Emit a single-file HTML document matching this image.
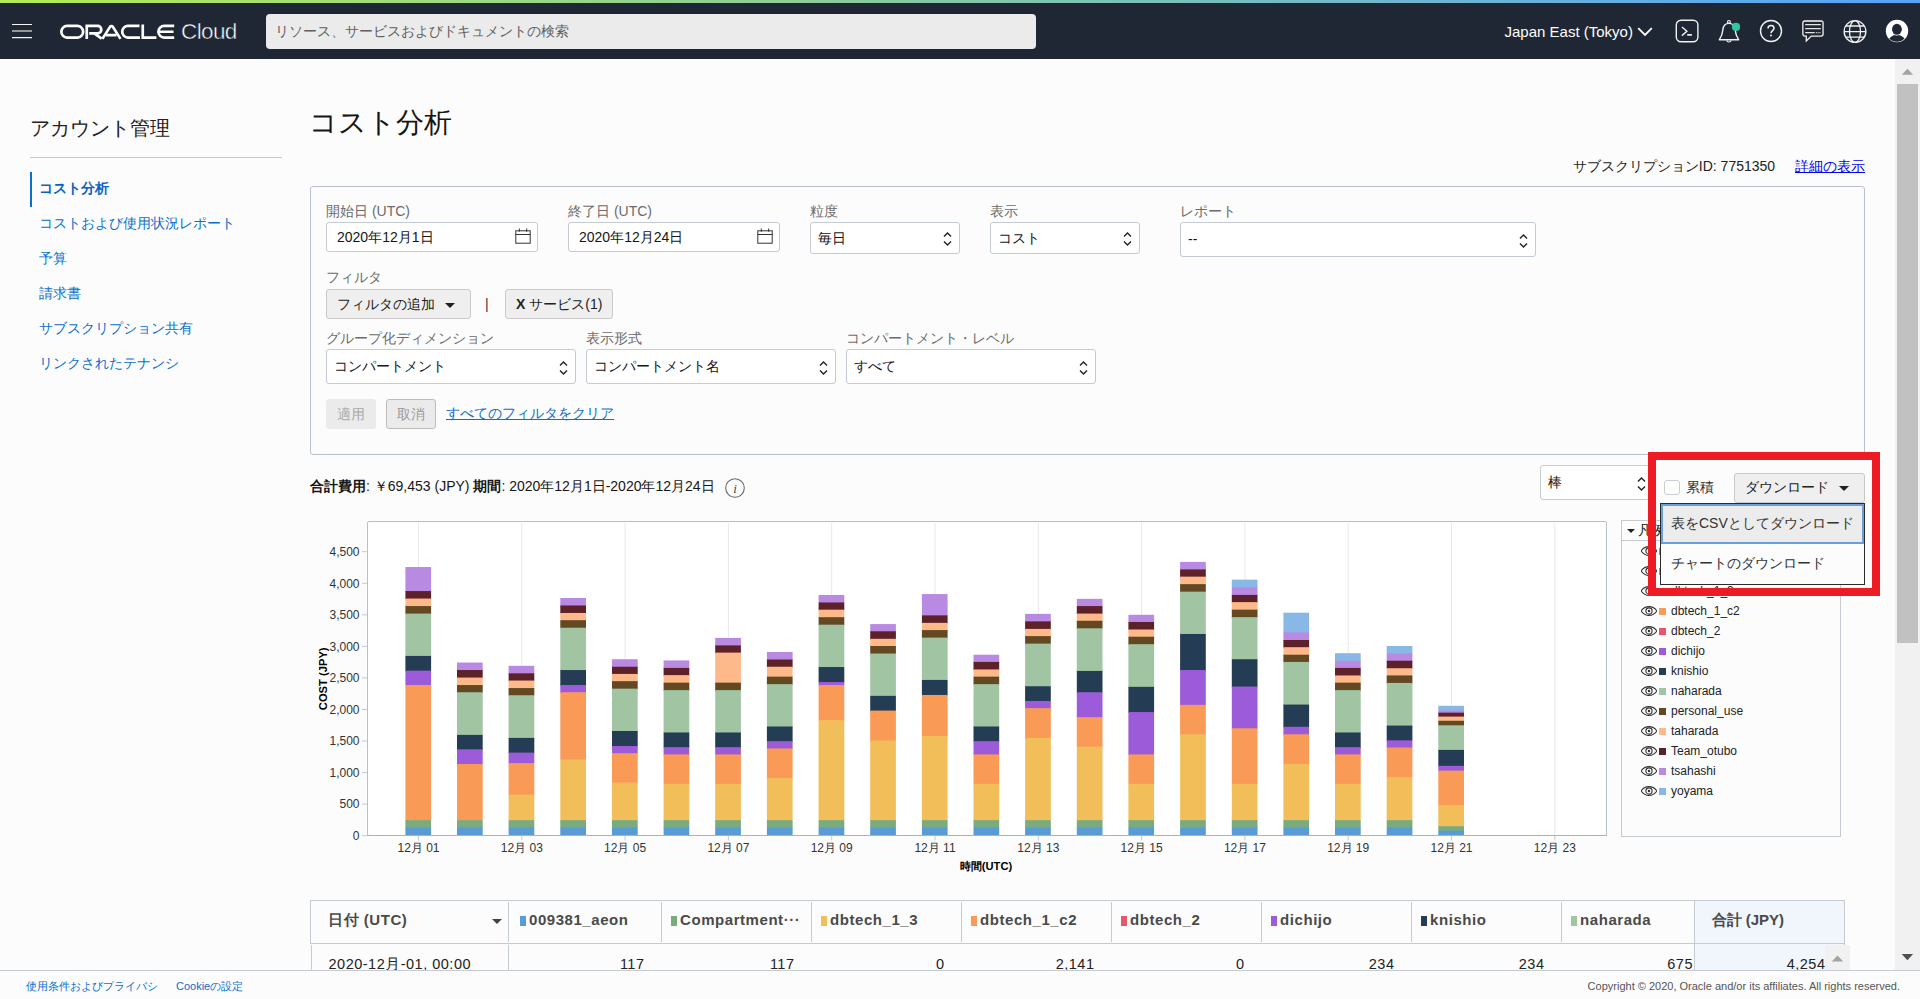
<!DOCTYPE html>
<html lang="ja">
<head>
<meta charset="utf-8">
<title>コスト分析 | Oracle Cloud Infrastructure</title>
<style>
*{box-sizing:border-box;margin:0;padding:0}
html,body{width:1920px;height:999px;overflow:hidden;background:#fcfcfc;font-family:"Liberation Sans",sans-serif;color:#222;font-size:14px}
body{position:relative}
.abs{position:absolute}
.strip{position:absolute;left:0;top:0;width:1920px;height:3px;background:linear-gradient(90deg,#b4eb55 0%,#55a3fa 100%)}
.hdr{position:absolute;left:0;top:3px;width:1920px;height:56px;background:#1e2733}
.hdr svg{position:absolute}
.cloud{position:absolute;left:181px;top:14.7px;font-size:22.5px;color:#fff;letter-spacing:-0.600px;line-height:28px;-webkit-text-stroke:0.500px #1e2733}
.search{position:absolute;left:266px;top:11px;width:770px;height:35px;background:#ebebeb;border-radius:4px;color:#5f5f5f;font-size:14px;line-height:35px;padding-left:9px;white-space:nowrap}
.region{position:absolute;left:1504.5px;top:19px;font-size:15px;color:#fff;line-height:20px;white-space:nowrap}
/* left nav */
.navt{position:absolute;left:30px;top:114px;font-size:19.5px;line-height:28px;color:#222;white-space:nowrap}
.navhr{position:absolute;left:30px;top:156.5px;width:252px;height:1px;background:#c4cbd2}
.nav a{position:absolute;left:39px;font-size:14px;line-height:20px;color:#0b6fcb;text-decoration:none;white-space:nowrap}
.nav .act{font-weight:bold;color:#0a63c4}
.navbar{position:absolute;left:30px;top:172px;width:2px;height:35px;background:#0b6fcb}
h1{position:absolute;left:308.500px;top:104px;font-size:28px;line-height:38px;font-weight:normal;color:#161616;white-space:nowrap}
.sub{position:absolute;right:55px;top:156px;font-size:14px;line-height:20px;color:#222;white-space:nowrap}
.sub a{color:#0000ee;margin-left:16px;text-decoration:underline}
.panel{position:absolute;left:310px;top:186px;width:1555px;height:269px;border:1px solid #b9c1cb;border-radius:3px}
.lbl{position:absolute;font-size:14px;line-height:18px;color:#6b6b6b;white-space:nowrap}
.inp{position:absolute;height:30px;border:1px solid #c4cbd2;border-radius:3px;background:#fff;font-size:14px;line-height:28px;padding-left:10px;color:#161616;white-space:nowrap}
.sel{position:absolute;border:1px solid #c4cbd2;border-radius:3px;background:#fff;font-size:14px;color:#161616;white-space:nowrap;padding-left:7px}
.sel svg,.inp svg{position:absolute}
.btn{position:absolute;height:30px;border:1px solid #c9c9c9;border-radius:3px;background:#efefef;font-size:14px;line-height:28px;color:#222;white-space:nowrap;text-align:left}
.caret{display:inline-block;width:0;height:0;border-left:5px solid transparent;border-right:5px solid transparent;border-top:5.5px solid #222;vertical-align:middle}
.lnk{position:absolute;color:#0b6fcb;text-decoration:underline;font-size:14px;line-height:20px;white-space:nowrap}
.sum{position:absolute;left:310px;top:476px;font-size:14px;line-height:20px;color:#161616;white-space:nowrap}
.chart{position:absolute}
.chart .ax{font-family:"Liberation Sans",sans-serif;font-size:12px;fill:#333}
.chart .axt{font-family:"Liberation Sans",sans-serif;font-size:11.200px;font-weight:bold;fill:#000}
.legend{position:absolute;left:1621px;top:520px;width:220px;height:317px;border:1px solid #c4cbd2;background:#fcfcfc}
.lh{position:absolute;left:0;top:0;width:218px;height:20px;border-bottom:1px solid #c4cbd2}
.tri{position:absolute;left:4.500px;top:7.500px;width:0;height:0;border-left:4px solid transparent;border-right:4px solid transparent;border-top:4.200px solid #222}
.lht{position:absolute;left:16px;top:0px;font-size:14px;line-height:19px;color:#111;white-space:nowrap}
.li{position:absolute;left:0;height:16px;width:218px}
.li .eye{position:absolute;left:19px;top:3px}
.li .sw{position:absolute;left:36.500px;top:4.5px;width:7px;height:7px}
.li .ln{position:absolute;left:49px;top:0;font-size:12px;line-height:16px;color:#222;white-space:nowrap}
/* red box & dropdown */
.red{position:absolute;left:1648px;top:452px;width:232px;height:144px;border:8px solid #ed1c24;background:transparent}
.cb{position:absolute;left:1664px;top:479.5px;width:15.5px;height:15.5px;border:1px solid #c9ced3;border-radius:3px;background:#fff}
.menu{position:absolute;left:1660px;top:503px;width:205px;height:82px;border:1px solid #2b2b2b;background:#fcfcfc}
.mi{position:absolute;left:0;width:203px;font-size:14px;color:#333;white-space:nowrap;padding-left:10px}
.mi.hl{top:0;height:40px;line-height:34.500px;background:#ececec;border:2px solid #6b9fdc;padding-left:8px}
/* table */
.tbl{position:absolute;left:310.5px;top:900px;width:1540px;height:70px}
.thead{position:absolute;left:-0.5px;top:-0.5px;width:1535px;height:44.5px;border:1px solid #c4cbd2;background:#fcfcfc}
.tot{position:absolute;left:1383.5px;top:-0.5px;width:151px;height:71px;border:1px solid #c4cbd2;border-bottom:none;background:#f1f6fd}
.th{position:absolute;top:0;height:44px}
.vs{position:absolute;top:2px;width:1px;height:40px;background:#c4cbd2}
.bl{position:absolute;top:45px;width:1px;height:26px;background:#c4cbd2}
.tht{position:absolute;top:9px;font-size:15px;line-height:22px;font-weight:bold;color:#4a4a4a;white-space:nowrap;letter-spacing:.55px}
.csw{position:absolute;left:11.500px;top:16px;width:6px;height:10px}
.sort{position:absolute;left:181px;top:19px;width:0;height:0;border-left:5px solid transparent;border-right:5px solid transparent;border-top:5.500px solid #444}
.td{position:absolute;top:44px;height:26px;font-size:14.500px;line-height:40px;text-align:right;color:#222;overflow:hidden;letter-spacing:.5px;white-space:nowrap}
.td0{position:absolute;left:0;top:44px;width:198px;height:26px;font-size:14.500px;line-height:40px;padding-left:18px;white-space:nowrap;overflow:hidden;letter-spacing:.5px}
.tsb{position:absolute;left:1514.500px;top:44.500px;width:25px;height:26px;background:#f1f1f1}
.up{position:absolute;left:7px;top:10.500px;width:0;height:0;border-left:5.500px solid transparent;border-right:5.500px solid transparent;border-bottom:6px solid #a3a3a3}
/* scrollbar */
.sbt{position:absolute;left:1895px;top:59px;width:25px;height:911px;background:#f1f1f1}
.sbth{position:absolute;left:1897px;top:84px;width:21px;height:559px;background:#c1c1c1}
/* footer */
.ftr{position:absolute;left:0;top:970px;width:1920px;height:29px;border-top:1px solid #c4cbd2;background:#fcfcfc;font-size:11px;line-height:14px}
.ftr a{position:absolute;top:8px;color:#0b6fcb;text-decoration:none;white-space:nowrap}
.ftr span{position:absolute;top:8px;right:20px;color:#555;white-space:nowrap}
</style>
</head>
<body>
<div class="strip"></div>
<div class="hdr">
<svg style="left:12px;top:20px" width="20" height="16" viewBox="0 0 20 16"><path d="M0 1.500H20M0 14.600H20" stroke="#f4f4f4" stroke-width="1.200" fill="none"/><path d="M0 8H20" stroke="#9c9c9c" stroke-width="1.900" fill="none"/></svg>
<svg style="left:60px;top:21px" width="116" height="16" viewBox="0 0 116 16"><g fill="none" stroke="#fff" stroke-width="2.700">
<path d="M7.150 1.950h10.200a5.800 5.800 0 0 1 0 11.600h-10.200a5.800 5.800 0 0 1 0-11.600z"/>
<path d="M26.750 14.900V1.950H37.600a3.700 3.700 0 0 1 0 7.400H29.200M34.600 9.600L41.700 14.700"/>
<path d="M42.400 14.900L50 2.900a1.700 1.700 0 0 1 2.900 0L60.500 14.900M46 11.200H56.500"/>
<path d="M79.500 1.950H68a5.800 5.800 0 0 0 0 11.600H80"/>
<path d="M82.750 0.600V13.550H96.400"/>
<path d="M114.200 1.950H104.200a5.800 5.800 0 0 0 0 11.600H114.200M99.500 7.750H113.500"/>
</g></svg>
<div class="cloud">Cloud</div>
<div class="search">リソース、サービスおよびドキュメントの検索</div>
<div class="region">Japan East (Tokyo)</div>
<svg style="left:1637px;top:23.500px" width="16" height="10" viewBox="0 0 16 10"><path d="M1.200 1.200L8 8l6.800-6.800" stroke="#fff" stroke-width="1.800" fill="none"/></svg>
<svg style="left:1675px;top:16px" width="24" height="24" viewBox="0 0 24 24"><rect x="1.300" y="1.200" width="21.600" height="21.600" rx="4.800" fill="none" stroke="#f2f2f2" stroke-width="1.400"/><path d="M6.900 8L11.900 12.300L6.900 16.600" fill="none" stroke="#f2f2f2" stroke-width="1.400"/><path d="M12.200 15.900H16.900" fill="none" stroke="#f2f2f2" stroke-width="1.700"/></svg>
<svg style="left:1717px;top:15px" width="26" height="28" viewBox="0 0 26 28"><path d="M11.900 5.400C8.200 5.400 6.300 8 5.900 11.600C5.500 15.600 4.300 19 2.300 21.800H21.700C19.700 19 18.500 15.600 18.100 11.600C17.700 8 15.600 5.400 11.900 5.400Z" fill="none" stroke="#f2f2f2" stroke-width="1.400" stroke-linejoin="round"/><circle cx="11.900" cy="3.900" r="1.400" fill="none" stroke="#f2f2f2" stroke-width="1.200"/><path d="M9.600 22.300a2.400 2.400 0 0 0 4.600 0" fill="none" stroke="#f2f2f2" stroke-width="1.200"/><circle cx="19" cy="8.900" r="4.100" fill="#33c5a0"/></svg>
<svg style="left:1759px;top:15.900px" width="24" height="24" viewBox="0 0 24 24"><circle cx="12" cy="12" r="10.500" fill="none" stroke="#f2f2f2" stroke-width="1.400"/><path d="M9 9.600c0-1.900 1.300-3 3-3s3 1.100 3 2.700c0 2.200-3 2.400-3 4.900" fill="none" stroke="#f2f2f2" stroke-width="1.500"/><circle cx="12" cy="16.600" r="1" fill="#f2f2f2"/></svg>
<svg style="left:1801px;top:16px" width="24" height="26" viewBox="0 0 24 26"><path d="M1.850 3.850a2 2 0 0 1 2-2h16.200a2 2 0 0 1 2 2v11.200a2 2 0 0 1-2 2H10.300L5.300 22v-4.950H3.850a2 2 0 0 1-2-2z" fill="none" stroke="#f2f2f2" stroke-width="1.300"/><path d="M3 2.300h18" stroke="#c9cbce" stroke-width="1.300"/><path d="M4.200 5.700h15.600M4.200 9.700h15.600M4.200 13.700h9.500" stroke="#e4e5e7" stroke-width="1.300"/><path d="M14.800 13.700h5" stroke="#e4e5e7" stroke-width="1.300" stroke-dasharray="1 0.800"/></svg>
<svg style="left:1843px;top:16px" width="24" height="24" viewBox="0 0 24 24"><g fill="none" stroke="#f2f2f2" stroke-width="1.300"><circle cx="12" cy="12.600" r="10.900"/><ellipse cx="12" cy="12.600" rx="5.500" ry="10.900"/><path d="M1.100 12.600h21.800M2.900 7h18.200M2.900 18.200h18.200"/></g></svg>
<svg style="left:1885px;top:16px" width="24" height="24" viewBox="0 0 24 24"><circle cx="12" cy="12" r="11.200" fill="#fff"/><ellipse cx="11.900" cy="10.300" rx="4.900" ry="5.500" fill="#1e2733"/><path d="M4.300 19.600c1.500-2.300 3.600-3.300 5.600-3.700c1.300 0.700 2.700 0.700 4 0c2 0.400 4.100 1.400 5.600 3.700a10.600 10.600 0 0 1-15.200 0z" fill="#1e2733"/></svg>
</div>

<div class="navt">アカウント管理</div>
<div class="navhr"></div>
<div class="navbar"></div>
<div class="nav">
<a class="act" style="top:178px">コスト分析</a>
<a style="top:213px">コストおよび使用状況レポート</a>
<a style="top:248px">予算</a>
<a style="top:283px">請求書</a>
<a style="top:318px">サブスクリプション共有</a>
<a style="top:353px">リンクされたテナンシ</a>
</div>

<h1>コスト分析</h1>
<div class="sub">サブスクリプションID: 7751350 <a>詳細の表示</a></div>

<div class="panel"></div>
<div class="lbl" style="left:326px;top:202px">開始日 (UTC)</div>
<div class="lbl" style="left:568px;top:202px">終了日 (UTC)</div>
<div class="lbl" style="left:810px;top:202px">粒度</div>
<div class="lbl" style="left:990px;top:202px">表示</div>
<div class="lbl" style="left:1180px;top:202px">レポート</div>
<div class="inp" style="left:326px;top:222px;width:212px">2020年12月1日<svg style="right:6px;top:5px" width="16" height="16" viewBox="0 0 16 16"><rect x="0.800" y="2.800" width="14.400" height="12.400" fill="none" stroke="#333" stroke-width="1"/><path d="M0.800 6.500h14.400M4.300 0.500v3.300M11.700 0.500v3.300" stroke="#333" stroke-width="1"/></svg></div>
<div class="inp" style="left:568px;top:222px;width:212px">2020年12月24日<svg style="right:6px;top:5px" width="16" height="16" viewBox="0 0 16 16"><rect x="0.800" y="2.800" width="14.400" height="12.400" fill="none" stroke="#333" stroke-width="1"/><path d="M0.800 6.500h14.400M4.300 0.500v3.300M11.700 0.500v3.300" stroke="#333" stroke-width="1"/></svg></div>
<div class="sel" style="left:810px;top:222px;width:150px;height:32px;line-height:30px">毎日<svg style="right:7px;top:8px" width="9" height="16" viewBox="0 0 9 16"><path d="M1 5.500L4.500 2 8 5.500M1 10.500L4.500 14 8 10.500" fill="none" stroke="#222" stroke-width="1.400"/></svg></div>
<div class="sel" style="left:990px;top:222px;width:150px;height:32px;line-height:30px">コスト<svg style="right:7px;top:8px" width="9" height="16" viewBox="0 0 9 16"><path d="M1 5.500L4.500 2 8 5.500M1 10.500L4.500 14 8 10.500" fill="none" stroke="#222" stroke-width="1.400"/></svg></div>
<div class="sel" style="left:1180px;top:222px;width:356px;height:35px;line-height:33px">--<svg style="right:7px;top:10px" width="9" height="16" viewBox="0 0 9 16"><path d="M1 5.500L4.500 2 8 5.500M1 10.500L4.500 14 8 10.500" fill="none" stroke="#222" stroke-width="1.400"/></svg></div>
<div class="lbl" style="left:326px;top:268px">フィルタ</div>
<div class="btn" style="left:326px;top:289px;width:145px;padding-left:10px">フィルタの追加 <span class="caret" style="margin-left:6px"></span></div>
<div class="abs" style="left:485px;top:295px;font-size:14px;line-height:18px;color:#333">|</div>
<div class="btn" style="left:505px;top:289px;width:108px;padding-left:10px"><b style="font-size:14px">X</b> サービス(1)</div>
<div class="lbl" style="left:326px;top:329px">グループ化ディメンション</div>
<div class="lbl" style="left:586px;top:329px">表示形式</div>
<div class="lbl" style="left:846px;top:329px">コンパートメント・レベル</div>
<div class="sel" style="left:326px;top:349px;width:250px;height:35px;line-height:33px">コンパートメント<svg style="right:7px;top:9.5px" width="9" height="16" viewBox="0 0 9 16"><path d="M1 5.500L4.500 2 8 5.500M1 10.500L4.500 14 8 10.500" fill="none" stroke="#222" stroke-width="1.400"/></svg></div>
<div class="sel" style="left:586px;top:349px;width:250px;height:35px;line-height:33px">コンパートメント名<svg style="right:7px;top:9.5px" width="9" height="16" viewBox="0 0 9 16"><path d="M1 5.500L4.500 2 8 5.500M1 10.500L4.500 14 8 10.500" fill="none" stroke="#222" stroke-width="1.400"/></svg></div>
<div class="sel" style="left:846px;top:349px;width:250px;height:35px;line-height:33px">すべて<svg style="right:7px;top:9.5px" width="9" height="16" viewBox="0 0 9 16"><path d="M1 5.500L4.500 2 8 5.500M1 10.500L4.500 14 8 10.500" fill="none" stroke="#222" stroke-width="1.400"/></svg></div>
<div class="btn" style="left:326px;top:399px;width:50px;border-color:#ebebeb;background:#ebebeb;color:#a8a8a8;text-align:center">適用</div>
<div class="btn" style="left:386px;top:399px;width:50px;border-color:#bdbdbd;background:#ebebeb;color:#9a9a9a;text-align:center">取消</div>
<a class="lnk" style="left:446px;top:403px">すべてのフィルタをクリア</a>

<div class="sum"><b>合計費用</b>: ￥69,453 (JPY) <b>期間</b>: 2020年12月1日-2020年12月24日</div>
<svg class="abs" style="left:724px;top:476.700px" width="22" height="22" viewBox="0 0 22 22"><circle cx="11" cy="11" r="9.300" fill="none" stroke="#6a6a6a" stroke-width="1.100"/><text x="11" y="15.500" text-anchor="middle" font-family="Liberation Serif" font-style="italic" font-size="13" fill="#444">i</text></svg>
<div class="sel" style="left:1540px;top:465px;width:112px;height:35px;line-height:33px">棒<svg style="right:5px;top:9.5px" width="9" height="16" viewBox="0 0 9 16"><path d="M1 5.500L4.500 2 8 5.500M1 10.500L4.500 14 8 10.500" fill="none" stroke="#222" stroke-width="1.400"/></svg></div>

<svg class="chart" style="left:300px;top:512px" width="1320" height="370" viewBox="300 512 1320 370">
<rect x="367.5" y="521.5" width="1239" height="314" rx="1.5" fill="#fff" stroke="#b7c0ca" stroke-width="1"/>
<line x1="418.5" y1="523" x2="418.5" y2="835" stroke="#e8e8e8" stroke-width="1"/>
<line x1="418.5" y1="836" x2="418.5" y2="840.5" stroke="#c4cbd2" stroke-width="1"/>
<text x="418.5" y="852" text-anchor="middle" class="ax">12月 01</text>
<line x1="521.8" y1="523" x2="521.8" y2="835" stroke="#e8e8e8" stroke-width="1"/>
<line x1="521.8" y1="836" x2="521.8" y2="840.5" stroke="#c4cbd2" stroke-width="1"/>
<text x="521.8" y="852" text-anchor="middle" class="ax">12月 03</text>
<line x1="625.1" y1="523" x2="625.1" y2="835" stroke="#e8e8e8" stroke-width="1"/>
<line x1="625.1" y1="836" x2="625.1" y2="840.5" stroke="#c4cbd2" stroke-width="1"/>
<text x="625.1" y="852" text-anchor="middle" class="ax">12月 05</text>
<line x1="728.4" y1="523" x2="728.4" y2="835" stroke="#e8e8e8" stroke-width="1"/>
<line x1="728.4" y1="836" x2="728.4" y2="840.5" stroke="#c4cbd2" stroke-width="1"/>
<text x="728.4" y="852" text-anchor="middle" class="ax">12月 07</text>
<line x1="831.7" y1="523" x2="831.7" y2="835" stroke="#e8e8e8" stroke-width="1"/>
<line x1="831.7" y1="836" x2="831.7" y2="840.5" stroke="#c4cbd2" stroke-width="1"/>
<text x="831.7" y="852" text-anchor="middle" class="ax">12月 09</text>
<line x1="935.0" y1="523" x2="935.0" y2="835" stroke="#e8e8e8" stroke-width="1"/>
<line x1="935.0" y1="836" x2="935.0" y2="840.5" stroke="#c4cbd2" stroke-width="1"/>
<text x="935.0" y="852" text-anchor="middle" class="ax">12月 11</text>
<line x1="1038.3" y1="523" x2="1038.3" y2="835" stroke="#e8e8e8" stroke-width="1"/>
<line x1="1038.3" y1="836" x2="1038.3" y2="840.5" stroke="#c4cbd2" stroke-width="1"/>
<text x="1038.3" y="852" text-anchor="middle" class="ax">12月 13</text>
<line x1="1141.6" y1="523" x2="1141.6" y2="835" stroke="#e8e8e8" stroke-width="1"/>
<line x1="1141.6" y1="836" x2="1141.6" y2="840.5" stroke="#c4cbd2" stroke-width="1"/>
<text x="1141.6" y="852" text-anchor="middle" class="ax">12月 15</text>
<line x1="1244.9" y1="523" x2="1244.9" y2="835" stroke="#e8e8e8" stroke-width="1"/>
<line x1="1244.9" y1="836" x2="1244.9" y2="840.5" stroke="#c4cbd2" stroke-width="1"/>
<text x="1244.9" y="852" text-anchor="middle" class="ax">12月 17</text>
<line x1="1348.2" y1="523" x2="1348.2" y2="835" stroke="#e8e8e8" stroke-width="1"/>
<line x1="1348.2" y1="836" x2="1348.2" y2="840.5" stroke="#c4cbd2" stroke-width="1"/>
<text x="1348.2" y="852" text-anchor="middle" class="ax">12月 19</text>
<line x1="1451.5" y1="523" x2="1451.5" y2="835" stroke="#e8e8e8" stroke-width="1"/>
<line x1="1451.5" y1="836" x2="1451.5" y2="840.5" stroke="#c4cbd2" stroke-width="1"/>
<text x="1451.5" y="852" text-anchor="middle" class="ax">12月 21</text>
<line x1="1554.8" y1="523" x2="1554.8" y2="835" stroke="#e8e8e8" stroke-width="1"/>
<line x1="1554.8" y1="836" x2="1554.8" y2="840.5" stroke="#c4cbd2" stroke-width="1"/>
<text x="1554.8" y="852" text-anchor="middle" class="ax">12月 23</text>
<line x1="362" y1="835.7" x2="367" y2="835.7" stroke="#c4cbd2" stroke-width="1"/>
<text x="359.5" y="839.9" text-anchor="end" class="ax">0</text>
<line x1="362" y1="804.1" x2="367" y2="804.1" stroke="#c4cbd2" stroke-width="1"/>
<text x="359.5" y="808.3" text-anchor="end" class="ax">500</text>
<line x1="362" y1="772.6" x2="367" y2="772.6" stroke="#c4cbd2" stroke-width="1"/>
<text x="359.5" y="776.8" text-anchor="end" class="ax">1,000</text>
<line x1="362" y1="741.0" x2="367" y2="741.0" stroke="#c4cbd2" stroke-width="1"/>
<text x="359.5" y="745.2" text-anchor="end" class="ax">1,500</text>
<line x1="362" y1="709.5" x2="367" y2="709.5" stroke="#c4cbd2" stroke-width="1"/>
<text x="359.5" y="713.7" text-anchor="end" class="ax">2,000</text>
<line x1="362" y1="677.9" x2="367" y2="677.9" stroke="#c4cbd2" stroke-width="1"/>
<text x="359.5" y="682.1" text-anchor="end" class="ax">2,500</text>
<line x1="362" y1="646.4" x2="367" y2="646.4" stroke="#c4cbd2" stroke-width="1"/>
<text x="359.5" y="650.6" text-anchor="end" class="ax">3,000</text>
<line x1="362" y1="614.8" x2="367" y2="614.8" stroke="#c4cbd2" stroke-width="1"/>
<text x="359.5" y="619.0" text-anchor="end" class="ax">3,500</text>
<line x1="362" y1="583.3" x2="367" y2="583.3" stroke="#c4cbd2" stroke-width="1"/>
<text x="359.5" y="587.5" text-anchor="end" class="ax">4,000</text>
<line x1="362" y1="551.7" x2="367" y2="551.7" stroke="#c4cbd2" stroke-width="1"/>
<text x="359.5" y="555.9" text-anchor="end" class="ax">4,500</text>
<rect x="405.4" y="567.03" width="25.7" height="24.72" fill="#b98ae2"/>
<rect x="405.4" y="591.05" width="25.7" height="8.21" fill="#5c2129"/>
<rect x="405.4" y="598.56" width="25.7" height="8.21" fill="#fdb98a"/>
<rect x="405.4" y="606.07" width="25.7" height="8.21" fill="#634822"/>
<rect x="405.4" y="613.57" width="25.7" height="43.04" fill="#a1c4a3"/>
<rect x="405.4" y="655.92" width="25.7" height="15.41" fill="#243d54"/>
<rect x="405.4" y="670.63" width="25.7" height="15.11" fill="#9c5bd9"/>
<rect x="405.4" y="685.05" width="25.7" height="135.84" fill="#fa9a57"/>
<rect x="405.4" y="820.18" width="25.7" height="8.21" fill="#7aab7d"/>
<rect x="405.4" y="827.69" width="25.7" height="7.51" fill="#5b9bd5"/>
<rect x="457.0" y="662.52" width="25.7" height="8.21" fill="#b98ae2"/>
<rect x="457.0" y="670.03" width="25.7" height="8.21" fill="#5c2129"/>
<rect x="457.0" y="677.54" width="25.7" height="8.21" fill="#fdb98a"/>
<rect x="457.0" y="685.05" width="25.7" height="7.91" fill="#634822"/>
<rect x="457.0" y="692.25" width="25.7" height="43.34" fill="#a1c4a3"/>
<rect x="457.0" y="734.89" width="25.7" height="15.11" fill="#243d54"/>
<rect x="457.0" y="749.31" width="25.7" height="15.41" fill="#9c5bd9"/>
<rect x="457.0" y="764.02" width="25.7" height="56.86" fill="#fa9a57"/>
<rect x="457.0" y="820.18" width="25.7" height="8.21" fill="#7aab7d"/>
<rect x="457.0" y="827.69" width="25.7" height="7.51" fill="#5b9bd5"/>
<rect x="508.6" y="665.83" width="25.7" height="8.21" fill="#b98ae2"/>
<rect x="508.6" y="673.33" width="25.7" height="7.91" fill="#5c2129"/>
<rect x="508.6" y="680.54" width="25.7" height="8.21" fill="#fdb98a"/>
<rect x="508.6" y="688.05" width="25.7" height="7.91" fill="#634822"/>
<rect x="508.6" y="695.26" width="25.7" height="43.34" fill="#a1c4a3"/>
<rect x="508.6" y="737.90" width="25.7" height="15.41" fill="#243d54"/>
<rect x="508.6" y="752.61" width="25.7" height="11.21" fill="#9c5bd9"/>
<rect x="508.6" y="763.12" width="25.7" height="32.23" fill="#fa9a57"/>
<rect x="508.6" y="794.65" width="25.7" height="26.23" fill="#f2be5a"/>
<rect x="508.6" y="820.18" width="25.7" height="8.21" fill="#7aab7d"/>
<rect x="508.6" y="827.69" width="25.7" height="7.51" fill="#5b9bd5"/>
<rect x="560.3" y="597.96" width="25.7" height="8.21" fill="#b98ae2"/>
<rect x="560.3" y="605.47" width="25.7" height="8.21" fill="#5c2129"/>
<rect x="560.3" y="612.97" width="25.7" height="7.91" fill="#fdb98a"/>
<rect x="560.3" y="620.18" width="25.7" height="8.21" fill="#634822"/>
<rect x="560.3" y="627.69" width="25.7" height="43.04" fill="#a1c4a3"/>
<rect x="560.3" y="670.03" width="25.7" height="15.72" fill="#243d54"/>
<rect x="560.3" y="685.05" width="25.7" height="7.91" fill="#9c5bd9"/>
<rect x="560.3" y="692.25" width="25.7" height="67.97" fill="#fa9a57"/>
<rect x="560.3" y="759.52" width="25.7" height="61.36" fill="#f2be5a"/>
<rect x="560.3" y="820.18" width="25.7" height="8.21" fill="#7aab7d"/>
<rect x="560.3" y="827.69" width="25.7" height="7.51" fill="#5b9bd5"/>
<rect x="612.0" y="659.22" width="25.7" height="8.21" fill="#b98ae2"/>
<rect x="612.0" y="666.73" width="25.7" height="7.91" fill="#5c2129"/>
<rect x="612.0" y="673.93" width="25.7" height="7.91" fill="#fdb98a"/>
<rect x="612.0" y="681.14" width="25.7" height="8.21" fill="#634822"/>
<rect x="612.0" y="688.65" width="25.7" height="43.04" fill="#a1c4a3"/>
<rect x="612.0" y="730.99" width="25.7" height="15.72" fill="#243d54"/>
<rect x="612.0" y="746.01" width="25.7" height="7.91" fill="#9c5bd9"/>
<rect x="612.0" y="753.21" width="25.7" height="30.13" fill="#fa9a57"/>
<rect x="612.0" y="782.64" width="25.7" height="38.24" fill="#f2be5a"/>
<rect x="612.0" y="820.18" width="25.7" height="8.21" fill="#7aab7d"/>
<rect x="612.0" y="827.69" width="25.7" height="7.51" fill="#5b9bd5"/>
<rect x="663.6" y="660.42" width="25.7" height="8.21" fill="#b98ae2"/>
<rect x="663.6" y="667.93" width="25.7" height="7.91" fill="#5c2129"/>
<rect x="663.6" y="675.14" width="25.7" height="8.21" fill="#fdb98a"/>
<rect x="663.6" y="682.64" width="25.7" height="8.21" fill="#634822"/>
<rect x="663.6" y="690.15" width="25.7" height="43.04" fill="#a1c4a3"/>
<rect x="663.6" y="732.49" width="25.7" height="15.41" fill="#243d54"/>
<rect x="663.6" y="747.21" width="25.7" height="7.91" fill="#9c5bd9"/>
<rect x="663.6" y="754.41" width="25.7" height="30.13" fill="#fa9a57"/>
<rect x="663.6" y="783.84" width="25.7" height="37.04" fill="#f2be5a"/>
<rect x="663.6" y="820.18" width="25.7" height="8.21" fill="#7aab7d"/>
<rect x="663.6" y="827.69" width="25.7" height="7.51" fill="#5b9bd5"/>
<rect x="715.2" y="637.90" width="25.7" height="8.21" fill="#b98ae2"/>
<rect x="715.2" y="645.41" width="25.7" height="7.91" fill="#5c2129"/>
<rect x="715.2" y="652.61" width="25.7" height="30.73" fill="#fdb98a"/>
<rect x="715.2" y="682.64" width="25.7" height="8.21" fill="#634822"/>
<rect x="715.2" y="690.15" width="25.7" height="43.04" fill="#a1c4a3"/>
<rect x="715.2" y="732.49" width="25.7" height="15.41" fill="#243d54"/>
<rect x="715.2" y="747.21" width="25.7" height="7.91" fill="#9c5bd9"/>
<rect x="715.2" y="754.41" width="25.7" height="30.13" fill="#fa9a57"/>
<rect x="715.2" y="783.84" width="25.7" height="37.04" fill="#f2be5a"/>
<rect x="715.2" y="820.18" width="25.7" height="8.21" fill="#7aab7d"/>
<rect x="715.2" y="827.69" width="25.7" height="7.51" fill="#5b9bd5"/>
<rect x="766.9" y="652.01" width="25.7" height="8.21" fill="#b98ae2"/>
<rect x="766.9" y="659.52" width="25.7" height="7.91" fill="#5c2129"/>
<rect x="766.9" y="666.73" width="25.7" height="10.61" fill="#fdb98a"/>
<rect x="766.9" y="676.64" width="25.7" height="8.21" fill="#634822"/>
<rect x="766.9" y="684.14" width="25.7" height="43.04" fill="#a1c4a3"/>
<rect x="766.9" y="726.49" width="25.7" height="15.41" fill="#243d54"/>
<rect x="766.9" y="741.20" width="25.7" height="7.91" fill="#9c5bd9"/>
<rect x="766.9" y="748.41" width="25.7" height="30.13" fill="#fa9a57"/>
<rect x="766.9" y="777.84" width="25.7" height="43.04" fill="#f2be5a"/>
<rect x="766.9" y="820.18" width="25.7" height="8.21" fill="#7aab7d"/>
<rect x="766.9" y="827.69" width="25.7" height="7.51" fill="#5b9bd5"/>
<rect x="818.6" y="594.95" width="25.7" height="8.21" fill="#b98ae2"/>
<rect x="818.6" y="602.46" width="25.7" height="7.91" fill="#5c2129"/>
<rect x="818.6" y="609.67" width="25.7" height="8.21" fill="#fdb98a"/>
<rect x="818.6" y="617.18" width="25.7" height="8.21" fill="#634822"/>
<rect x="818.6" y="624.68" width="25.7" height="43.04" fill="#a1c4a3"/>
<rect x="818.6" y="667.03" width="25.7" height="15.72" fill="#243d54"/>
<rect x="818.6" y="682.04" width="25.7" height="3.70" fill="#9c5bd9"/>
<rect x="818.6" y="685.05" width="25.7" height="35.84" fill="#fa9a57"/>
<rect x="818.6" y="720.18" width="25.7" height="100.70" fill="#f2be5a"/>
<rect x="818.6" y="820.18" width="25.7" height="8.21" fill="#7aab7d"/>
<rect x="818.6" y="827.69" width="25.7" height="7.51" fill="#5b9bd5"/>
<rect x="870.2" y="624.08" width="25.7" height="7.91" fill="#b98ae2"/>
<rect x="870.2" y="631.29" width="25.7" height="8.21" fill="#5c2129"/>
<rect x="870.2" y="638.80" width="25.7" height="7.91" fill="#fdb98a"/>
<rect x="870.2" y="646.01" width="25.7" height="8.21" fill="#634822"/>
<rect x="870.2" y="653.51" width="25.7" height="43.04" fill="#a1c4a3"/>
<rect x="870.2" y="695.86" width="25.7" height="15.41" fill="#243d54"/>
<rect x="870.2" y="710.57" width="25.7" height="30.73" fill="#fa9a57"/>
<rect x="870.2" y="740.60" width="25.7" height="80.28" fill="#f2be5a"/>
<rect x="870.2" y="820.18" width="25.7" height="8.21" fill="#7aab7d"/>
<rect x="870.2" y="827.69" width="25.7" height="7.51" fill="#5b9bd5"/>
<rect x="921.9" y="594.05" width="25.7" height="22.02" fill="#b98ae2"/>
<rect x="921.9" y="615.38" width="25.7" height="8.21" fill="#5c2129"/>
<rect x="921.9" y="622.88" width="25.7" height="7.91" fill="#fdb98a"/>
<rect x="921.9" y="630.09" width="25.7" height="8.21" fill="#634822"/>
<rect x="921.9" y="637.60" width="25.7" height="43.04" fill="#a1c4a3"/>
<rect x="921.9" y="679.94" width="25.7" height="15.72" fill="#243d54"/>
<rect x="921.9" y="694.95" width="25.7" height="41.84" fill="#fa9a57"/>
<rect x="921.9" y="736.10" width="25.7" height="84.78" fill="#f2be5a"/>
<rect x="921.9" y="820.18" width="25.7" height="8.21" fill="#7aab7d"/>
<rect x="921.9" y="827.69" width="25.7" height="7.51" fill="#5b9bd5"/>
<rect x="973.5" y="654.71" width="25.7" height="7.91" fill="#b98ae2"/>
<rect x="973.5" y="661.92" width="25.7" height="8.21" fill="#5c2129"/>
<rect x="973.5" y="669.43" width="25.7" height="7.91" fill="#fdb98a"/>
<rect x="973.5" y="676.64" width="25.7" height="8.21" fill="#634822"/>
<rect x="973.5" y="684.14" width="25.7" height="43.04" fill="#a1c4a3"/>
<rect x="973.5" y="726.49" width="25.7" height="15.41" fill="#243d54"/>
<rect x="973.5" y="741.20" width="25.7" height="13.91" fill="#9c5bd9"/>
<rect x="973.5" y="754.41" width="25.7" height="30.13" fill="#fa9a57"/>
<rect x="973.5" y="783.84" width="25.7" height="37.04" fill="#f2be5a"/>
<rect x="973.5" y="820.18" width="25.7" height="8.21" fill="#7aab7d"/>
<rect x="973.5" y="827.69" width="25.7" height="7.51" fill="#5b9bd5"/>
<rect x="1025.1" y="613.87" width="25.7" height="8.21" fill="#b98ae2"/>
<rect x="1025.1" y="621.38" width="25.7" height="8.21" fill="#5c2129"/>
<rect x="1025.1" y="628.89" width="25.7" height="7.91" fill="#fdb98a"/>
<rect x="1025.1" y="636.10" width="25.7" height="8.21" fill="#634822"/>
<rect x="1025.1" y="643.60" width="25.7" height="43.34" fill="#a1c4a3"/>
<rect x="1025.1" y="686.25" width="25.7" height="15.41" fill="#243d54"/>
<rect x="1025.1" y="700.96" width="25.7" height="7.91" fill="#9c5bd9"/>
<rect x="1025.1" y="708.17" width="25.7" height="30.43" fill="#fa9a57"/>
<rect x="1025.1" y="737.90" width="25.7" height="82.98" fill="#f2be5a"/>
<rect x="1025.1" y="820.18" width="25.7" height="8.21" fill="#7aab7d"/>
<rect x="1025.1" y="827.69" width="25.7" height="7.51" fill="#5b9bd5"/>
<rect x="1076.8" y="598.86" width="25.7" height="7.91" fill="#b98ae2"/>
<rect x="1076.8" y="606.07" width="25.7" height="8.21" fill="#5c2129"/>
<rect x="1076.8" y="613.57" width="25.7" height="7.91" fill="#fdb98a"/>
<rect x="1076.8" y="620.78" width="25.7" height="8.21" fill="#634822"/>
<rect x="1076.8" y="628.29" width="25.7" height="43.34" fill="#a1c4a3"/>
<rect x="1076.8" y="670.93" width="25.7" height="22.02" fill="#243d54"/>
<rect x="1076.8" y="692.25" width="25.7" height="25.62" fill="#9c5bd9"/>
<rect x="1076.8" y="717.18" width="25.7" height="30.13" fill="#fa9a57"/>
<rect x="1076.8" y="746.61" width="25.7" height="74.27" fill="#f2be5a"/>
<rect x="1076.8" y="820.18" width="25.7" height="8.21" fill="#7aab7d"/>
<rect x="1076.8" y="827.69" width="25.7" height="7.51" fill="#5b9bd5"/>
<rect x="1128.4" y="614.77" width="25.7" height="7.91" fill="#b98ae2"/>
<rect x="1128.4" y="621.98" width="25.7" height="8.21" fill="#5c2129"/>
<rect x="1128.4" y="629.49" width="25.7" height="7.91" fill="#fdb98a"/>
<rect x="1128.4" y="636.70" width="25.7" height="8.21" fill="#634822"/>
<rect x="1128.4" y="644.20" width="25.7" height="43.34" fill="#a1c4a3"/>
<rect x="1128.4" y="686.85" width="25.7" height="25.93" fill="#243d54"/>
<rect x="1128.4" y="712.07" width="25.7" height="43.04" fill="#9c5bd9"/>
<rect x="1128.4" y="754.41" width="25.7" height="30.13" fill="#fa9a57"/>
<rect x="1128.4" y="783.84" width="25.7" height="37.04" fill="#f2be5a"/>
<rect x="1128.4" y="820.18" width="25.7" height="8.21" fill="#7aab7d"/>
<rect x="1128.4" y="827.69" width="25.7" height="7.51" fill="#5b9bd5"/>
<rect x="1180.1" y="561.92" width="25.7" height="8.21" fill="#b98ae2"/>
<rect x="1180.1" y="569.43" width="25.7" height="7.91" fill="#5c2129"/>
<rect x="1180.1" y="576.64" width="25.7" height="8.21" fill="#fdb98a"/>
<rect x="1180.1" y="584.14" width="25.7" height="8.21" fill="#634822"/>
<rect x="1180.1" y="591.65" width="25.7" height="43.04" fill="#a1c4a3"/>
<rect x="1180.1" y="633.99" width="25.7" height="36.74" fill="#243d54"/>
<rect x="1180.1" y="670.03" width="25.7" height="35.53" fill="#9c5bd9"/>
<rect x="1180.1" y="704.86" width="25.7" height="30.13" fill="#fa9a57"/>
<rect x="1180.1" y="734.29" width="25.7" height="86.59" fill="#f2be5a"/>
<rect x="1180.1" y="820.18" width="25.7" height="8.21" fill="#7aab7d"/>
<rect x="1180.1" y="827.69" width="25.7" height="7.51" fill="#5b9bd5"/>
<rect x="1231.8" y="579.64" width="25.7" height="8.51" fill="#8ab8e6"/>
<rect x="1231.8" y="587.45" width="25.7" height="8.21" fill="#b98ae2"/>
<rect x="1231.8" y="594.95" width="25.7" height="7.91" fill="#5c2129"/>
<rect x="1231.8" y="602.16" width="25.7" height="8.21" fill="#fdb98a"/>
<rect x="1231.8" y="609.67" width="25.7" height="8.21" fill="#634822"/>
<rect x="1231.8" y="617.18" width="25.7" height="42.74" fill="#a1c4a3"/>
<rect x="1231.8" y="659.22" width="25.7" height="28.03" fill="#243d54"/>
<rect x="1231.8" y="686.55" width="25.7" height="42.44" fill="#9c5bd9"/>
<rect x="1231.8" y="728.29" width="25.7" height="56.26" fill="#fa9a57"/>
<rect x="1231.8" y="783.84" width="25.7" height="37.04" fill="#f2be5a"/>
<rect x="1231.8" y="820.18" width="25.7" height="8.21" fill="#7aab7d"/>
<rect x="1231.8" y="827.69" width="25.7" height="7.51" fill="#5b9bd5"/>
<rect x="1283.4" y="612.67" width="25.7" height="20.52" fill="#8ab8e6"/>
<rect x="1283.4" y="632.49" width="25.7" height="8.21" fill="#b98ae2"/>
<rect x="1283.4" y="640.00" width="25.7" height="7.91" fill="#5c2129"/>
<rect x="1283.4" y="647.21" width="25.7" height="8.21" fill="#fdb98a"/>
<rect x="1283.4" y="654.71" width="25.7" height="7.91" fill="#634822"/>
<rect x="1283.4" y="661.92" width="25.7" height="43.34" fill="#a1c4a3"/>
<rect x="1283.4" y="704.56" width="25.7" height="22.92" fill="#243d54"/>
<rect x="1283.4" y="726.79" width="25.7" height="8.21" fill="#9c5bd9"/>
<rect x="1283.4" y="734.29" width="25.7" height="30.43" fill="#fa9a57"/>
<rect x="1283.4" y="764.02" width="25.7" height="56.86" fill="#f2be5a"/>
<rect x="1283.4" y="820.18" width="25.7" height="8.21" fill="#7aab7d"/>
<rect x="1283.4" y="827.69" width="25.7" height="7.51" fill="#5b9bd5"/>
<rect x="1335.0" y="653.21" width="25.7" height="8.21" fill="#8ab8e6"/>
<rect x="1335.0" y="660.72" width="25.7" height="7.91" fill="#b98ae2"/>
<rect x="1335.0" y="667.93" width="25.7" height="8.21" fill="#5c2129"/>
<rect x="1335.0" y="675.44" width="25.7" height="7.91" fill="#fdb98a"/>
<rect x="1335.0" y="682.64" width="25.7" height="8.21" fill="#634822"/>
<rect x="1335.0" y="690.15" width="25.7" height="43.04" fill="#a1c4a3"/>
<rect x="1335.0" y="732.49" width="25.7" height="15.41" fill="#243d54"/>
<rect x="1335.0" y="747.21" width="25.7" height="7.91" fill="#9c5bd9"/>
<rect x="1335.0" y="754.41" width="25.7" height="30.13" fill="#fa9a57"/>
<rect x="1335.0" y="783.84" width="25.7" height="37.04" fill="#f2be5a"/>
<rect x="1335.0" y="820.18" width="25.7" height="8.21" fill="#7aab7d"/>
<rect x="1335.0" y="827.69" width="25.7" height="7.51" fill="#5b9bd5"/>
<rect x="1386.7" y="646.01" width="25.7" height="8.21" fill="#8ab8e6"/>
<rect x="1386.7" y="653.51" width="25.7" height="7.91" fill="#b98ae2"/>
<rect x="1386.7" y="660.72" width="25.7" height="8.21" fill="#5c2129"/>
<rect x="1386.7" y="668.23" width="25.7" height="7.91" fill="#fdb98a"/>
<rect x="1386.7" y="675.44" width="25.7" height="8.21" fill="#634822"/>
<rect x="1386.7" y="682.94" width="25.7" height="43.34" fill="#a1c4a3"/>
<rect x="1386.7" y="725.59" width="25.7" height="15.41" fill="#243d54"/>
<rect x="1386.7" y="740.30" width="25.7" height="7.91" fill="#9c5bd9"/>
<rect x="1386.7" y="747.51" width="25.7" height="30.13" fill="#fa9a57"/>
<rect x="1386.7" y="776.94" width="25.7" height="43.94" fill="#f2be5a"/>
<rect x="1386.7" y="820.18" width="25.7" height="8.21" fill="#7aab7d"/>
<rect x="1386.7" y="827.69" width="25.7" height="7.51" fill="#5b9bd5"/>
<rect x="1438.3" y="705.77" width="25.7" height="5.50" fill="#8ab8e6"/>
<rect x="1438.3" y="710.57" width="25.7" height="2.80" fill="#b98ae2"/>
<rect x="1438.3" y="712.67" width="25.7" height="4.60" fill="#5c2129"/>
<rect x="1438.3" y="716.58" width="25.7" height="4.90" fill="#fdb98a"/>
<rect x="1438.3" y="720.78" width="25.7" height="5.20" fill="#634822"/>
<rect x="1438.3" y="725.29" width="25.7" height="25.32" fill="#a1c4a3"/>
<rect x="1438.3" y="749.91" width="25.7" height="16.62" fill="#243d54"/>
<rect x="1438.3" y="765.83" width="25.7" height="5.50" fill="#9c5bd9"/>
<rect x="1438.3" y="770.63" width="25.7" height="35.23" fill="#fa9a57"/>
<rect x="1438.3" y="805.17" width="25.7" height="21.72" fill="#f2be5a"/>
<rect x="1438.3" y="826.19" width="25.7" height="5.20" fill="#7aab7d"/>
<rect x="1438.3" y="830.69" width="25.7" height="4.50" fill="#5b9bd5"/>
<line x1="367" y1="835.5" x2="1607" y2="835.5" stroke="#aab3bd" stroke-width="1"/>
<text x="986" y="870" text-anchor="middle" class="axt">時間(UTC)</text>
<text transform="translate(327,678.8) rotate(-90)" text-anchor="middle" class="axt">COST (JPY)</text>
</svg>
<div class="legend"><div class="lh"><span class="tri"></span><span class="lht">凡例</span></div>
<div class="li" style="top:22px"><svg class="eye" width="16" height="10" viewBox="0.5 0 16 10"><path d="M0.6 5C3 1.4 5.8 0.6 8.5 0.6S14 1.4 16.4 5C14 8.6 11.2 9.4 8.5 9.4S3 8.6 0.6 5Z" fill="none" stroke="#333" stroke-width="1.1"/><circle cx="8.5" cy="5" r="3.1" fill="none" stroke="#333" stroke-width="1.1"/><circle cx="8.5" cy="5" r="1.2" fill="#333"/></svg><span class="sw" style="background:#5b9bd5"></span><span class="ln">009381_aeon</span></div>
<div class="li" style="top:42px"><svg class="eye" width="16" height="10" viewBox="0.5 0 16 10"><path d="M0.6 5C3 1.4 5.8 0.6 8.5 0.6S14 1.4 16.4 5C14 8.6 11.2 9.4 8.5 9.4S3 8.6 0.6 5Z" fill="none" stroke="#333" stroke-width="1.1"/><circle cx="8.5" cy="5" r="3.1" fill="none" stroke="#333" stroke-width="1.1"/><circle cx="8.5" cy="5" r="1.2" fill="#333"/></svg><span class="sw" style="background:#7aab7d"></span><span class="ln">Compartment...</span></div>
<div class="li" style="top:62px"><svg class="eye" width="16" height="10" viewBox="0.5 0 16 10"><path d="M0.6 5C3 1.4 5.8 0.6 8.5 0.6S14 1.4 16.4 5C14 8.6 11.2 9.4 8.5 9.4S3 8.6 0.6 5Z" fill="none" stroke="#333" stroke-width="1.1"/><circle cx="8.5" cy="5" r="3.1" fill="none" stroke="#333" stroke-width="1.1"/><circle cx="8.5" cy="5" r="1.2" fill="#333"/></svg><span class="sw" style="background:#f2be5a"></span><span class="ln">dbtech_1_3</span></div>
<div class="li" style="top:82px"><svg class="eye" width="16" height="10" viewBox="0.5 0 16 10"><path d="M0.6 5C3 1.4 5.8 0.6 8.5 0.6S14 1.4 16.4 5C14 8.6 11.2 9.4 8.5 9.4S3 8.6 0.6 5Z" fill="none" stroke="#333" stroke-width="1.1"/><circle cx="8.5" cy="5" r="3.1" fill="none" stroke="#333" stroke-width="1.1"/><circle cx="8.5" cy="5" r="1.2" fill="#333"/></svg><span class="sw" style="background:#fa9a57"></span><span class="ln">dbtech_1_c2</span></div>
<div class="li" style="top:102px"><svg class="eye" width="16" height="10" viewBox="0.5 0 16 10"><path d="M0.6 5C3 1.4 5.8 0.6 8.5 0.6S14 1.4 16.4 5C14 8.6 11.2 9.4 8.5 9.4S3 8.6 0.6 5Z" fill="none" stroke="#333" stroke-width="1.1"/><circle cx="8.5" cy="5" r="3.1" fill="none" stroke="#333" stroke-width="1.1"/><circle cx="8.5" cy="5" r="1.2" fill="#333"/></svg><span class="sw" style="background:#e8566a"></span><span class="ln">dbtech_2</span></div>
<div class="li" style="top:122px"><svg class="eye" width="16" height="10" viewBox="0.5 0 16 10"><path d="M0.6 5C3 1.4 5.8 0.6 8.5 0.6S14 1.4 16.4 5C14 8.6 11.2 9.4 8.5 9.4S3 8.6 0.6 5Z" fill="none" stroke="#333" stroke-width="1.1"/><circle cx="8.5" cy="5" r="3.1" fill="none" stroke="#333" stroke-width="1.1"/><circle cx="8.5" cy="5" r="1.2" fill="#333"/></svg><span class="sw" style="background:#9c5bd9"></span><span class="ln">dichijo</span></div>
<div class="li" style="top:142px"><svg class="eye" width="16" height="10" viewBox="0.5 0 16 10"><path d="M0.6 5C3 1.4 5.8 0.6 8.5 0.6S14 1.4 16.4 5C14 8.6 11.2 9.4 8.5 9.4S3 8.6 0.6 5Z" fill="none" stroke="#333" stroke-width="1.1"/><circle cx="8.5" cy="5" r="3.1" fill="none" stroke="#333" stroke-width="1.1"/><circle cx="8.5" cy="5" r="1.2" fill="#333"/></svg><span class="sw" style="background:#243d54"></span><span class="ln">knishio</span></div>
<div class="li" style="top:162px"><svg class="eye" width="16" height="10" viewBox="0.5 0 16 10"><path d="M0.6 5C3 1.4 5.8 0.6 8.5 0.6S14 1.4 16.4 5C14 8.6 11.2 9.4 8.5 9.4S3 8.6 0.6 5Z" fill="none" stroke="#333" stroke-width="1.1"/><circle cx="8.5" cy="5" r="3.1" fill="none" stroke="#333" stroke-width="1.1"/><circle cx="8.5" cy="5" r="1.2" fill="#333"/></svg><span class="sw" style="background:#a1c4a3"></span><span class="ln">naharada</span></div>
<div class="li" style="top:182px"><svg class="eye" width="16" height="10" viewBox="0.5 0 16 10"><path d="M0.6 5C3 1.4 5.8 0.6 8.5 0.6S14 1.4 16.4 5C14 8.6 11.2 9.4 8.5 9.4S3 8.6 0.6 5Z" fill="none" stroke="#333" stroke-width="1.1"/><circle cx="8.5" cy="5" r="3.1" fill="none" stroke="#333" stroke-width="1.1"/><circle cx="8.5" cy="5" r="1.2" fill="#333"/></svg><span class="sw" style="background:#634822"></span><span class="ln">personal_use</span></div>
<div class="li" style="top:202px"><svg class="eye" width="16" height="10" viewBox="0.5 0 16 10"><path d="M0.6 5C3 1.4 5.8 0.6 8.5 0.6S14 1.4 16.4 5C14 8.6 11.2 9.4 8.5 9.4S3 8.6 0.6 5Z" fill="none" stroke="#333" stroke-width="1.1"/><circle cx="8.5" cy="5" r="3.1" fill="none" stroke="#333" stroke-width="1.1"/><circle cx="8.5" cy="5" r="1.2" fill="#333"/></svg><span class="sw" style="background:#fdb98a"></span><span class="ln">taharada</span></div>
<div class="li" style="top:222px"><svg class="eye" width="16" height="10" viewBox="0.5 0 16 10"><path d="M0.6 5C3 1.4 5.8 0.6 8.5 0.6S14 1.4 16.4 5C14 8.6 11.2 9.4 8.5 9.4S3 8.6 0.6 5Z" fill="none" stroke="#333" stroke-width="1.1"/><circle cx="8.5" cy="5" r="3.1" fill="none" stroke="#333" stroke-width="1.1"/><circle cx="8.5" cy="5" r="1.2" fill="#333"/></svg><span class="sw" style="background:#5c2129"></span><span class="ln">Team_otubo</span></div>
<div class="li" style="top:242px"><svg class="eye" width="16" height="10" viewBox="0.5 0 16 10"><path d="M0.6 5C3 1.4 5.8 0.6 8.5 0.6S14 1.4 16.4 5C14 8.6 11.2 9.4 8.5 9.4S3 8.6 0.6 5Z" fill="none" stroke="#333" stroke-width="1.1"/><circle cx="8.5" cy="5" r="3.1" fill="none" stroke="#333" stroke-width="1.1"/><circle cx="8.5" cy="5" r="1.2" fill="#333"/></svg><span class="sw" style="background:#b98ae2"></span><span class="ln">tsahashi</span></div>
<div class="li" style="top:262px"><svg class="eye" width="16" height="10" viewBox="0.5 0 16 10"><path d="M0.6 5C3 1.4 5.8 0.6 8.5 0.6S14 1.4 16.4 5C14 8.6 11.2 9.4 8.5 9.4S3 8.6 0.6 5Z" fill="none" stroke="#333" stroke-width="1.1"/><circle cx="8.5" cy="5" r="3.1" fill="none" stroke="#333" stroke-width="1.1"/><circle cx="8.5" cy="5" r="1.2" fill="#333"/></svg><span class="sw" style="background:#8ab8e6"></span><span class="ln">yoyama</span></div>
</div>

<div class="red"></div>
<svg class="abs" style="left:1625px;top:524px" width="40" height="80" viewBox="0 0 40 80"></svg>
<div class="cb"></div>
<div class="abs" style="left:1686px;top:477px;font-size:14px;line-height:20px;color:#333;white-space:nowrap">累積</div>
<div class="btn" style="left:1734px;top:473px;width:131px;padding-left:10px;line-height:26px">ダウンロード <span class="caret" style="margin-left:6px"></span></div>
<div class="menu"><div class="mi hl">表をCSVとしてダウンロード</div><div class="mi" style="top:40px;height:40px;line-height:38px">チャートのダウンロード</div></div>

<div class="tbl">
<div class="thead"></div>
<div class="tot"></div>
<div class="th" style="left:0;width:198px"><span class="tht" style="left:17.5px">日付 (UTC)</span><span class="sort"></span></div>
<div class="vs" style="left:197.5px"></div>
<div class="th" style="left:198.0px;width:153.0px"><span class="csw" style="left:11.5px;background:#5b9bd5"></span><span class="tht" style="left:20.5px">009381_aeon</span></div>
<div class="td" style="left:198.0px;width:136.0px">117</div>
<div class="vs" style="left:350.5px"></div>
<div class="th" style="left:351.0px;width:150.0px"><span class="csw" style="left:9.6px;background:#7aab7d"></span><span class="tht" style="left:18.6px">Compartment···</span></div>
<div class="td" style="left:351.0px;width:133.0px">117</div>
<div class="vs" style="left:500.5px"></div>
<div class="th" style="left:501.0px;width:150.0px"><span class="csw" style="left:9.6px;background:#f2be5a"></span><span class="tht" style="left:18.6px">dbtech_1_3</span></div>
<div class="td" style="left:501.0px;width:133.0px">0</div>
<div class="vs" style="left:650.5px"></div>
<div class="th" style="left:651.0px;width:150.0px"><span class="csw" style="left:9.6px;background:#fa9a57"></span><span class="tht" style="left:18.6px">dbtech_1_c2</span></div>
<div class="td" style="left:651.0px;width:133.0px">2,141</div>
<div class="vs" style="left:800.5px"></div>
<div class="th" style="left:801.0px;width:150.0px"><span class="csw" style="left:9.6px;background:#e8566a"></span><span class="tht" style="left:18.6px">dbtech_2</span></div>
<div class="td" style="left:801.0px;width:133.0px">0</div>
<div class="vs" style="left:950.5px"></div>
<div class="th" style="left:951.0px;width:150.0px"><span class="csw" style="left:9.6px;background:#9c5bd9"></span><span class="tht" style="left:18.6px">dichijo</span></div>
<div class="td" style="left:951.0px;width:133.0px">234</div>
<div class="vs" style="left:1100.5px"></div>
<div class="th" style="left:1101.0px;width:150.0px"><span class="csw" style="left:9.6px;background:#243d54"></span><span class="tht" style="left:18.6px">knishio</span></div>
<div class="td" style="left:1101.0px;width:133.0px">234</div>
<div class="vs" style="left:1250.5px"></div>
<div class="th" style="left:1251.0px;width:133.0px"><span class="csw" style="left:9.6px;background:#a1c4a3"></span><span class="tht" style="left:18.6px">naharada</span></div>
<div class="td" style="left:1251.0px;width:131.5px">675</div>
<div class="th" style="left:1384px;width:150px"><span class="tht" style="left:17px;letter-spacing:0">合計 (JPY)</span></div>
<div class="abs" style="left:1384px;top:43px;width:150px;height:1px;background:#c4cbd2"></div>
<div class="td" style="left:1384px;width:131px">4,254</div>
<div class="td0">2020-12月-01, 00:00</div>
<div class="bl" style="left:0.5px"></div><div class="bl" style="left:197.5px"></div>
<div class="tsb"><svg class="abs" style="left:0;top:0" width="25" height="26" viewBox="0 0 25 26"><path d="M6.800 16.500H18.200L12.500 10.400Z" fill="#a3a3a3"/></svg></div>
</div>

<div class="sbt"></div><div class="sbth"></div>
<svg class="abs" style="left:1895px;top:59px" width="25" height="911" viewBox="0 0 25 911"><path d="M6.800 15.800H18.100L12.450 9.700Z" fill="#a3a3a3"/><path d="M6.700 895H18.100L12.400 901.200Z" fill="#505050"/></svg>

<div class="ftr"><a style="left:26px">使用条件およびプライバシ</a><a style="left:176px">Cookieの設定</a><span>Copyright © 2020, Oracle and/or its affiliates. All rights reserved.</span></div>
</body>
</html>
